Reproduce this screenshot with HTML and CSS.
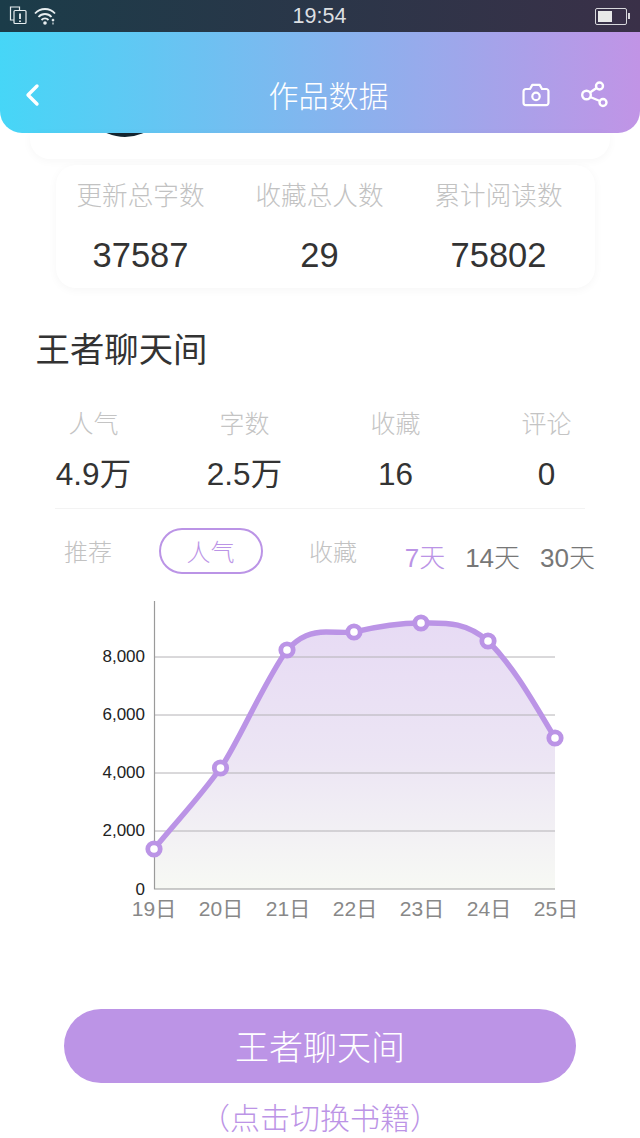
FILE: index.html
```html
<!DOCTYPE html>
<html lang="zh">

<head>
    <meta charset="UTF-8">
    <meta name="viewport" content="width=device-width, initial-scale=1.0">
    <title>作品数据</title>

    <link rel="stylesheet" href="styles.css">
</head>

<body>
    <div class="status-bar">
        <div class="status-icons">
            <svg width="19" height="20" viewBox="0 0 19 20" fill="none" stroke="#e8eef0" stroke-width="1.2">
                <path d="M5 14H1.5V1h9v3" />
                <rect x="5" y="4.500" width="12" height="13" rx="1" />
                <path d="M11 7.500v5.500M11 14.500v1.500" stroke-width="1.800" />
            </svg>
            <svg width="23" height="19" viewBox="0 0 23 19" fill="none" stroke="#e8eef0" stroke-width="1.800">
                <path d="M1 6.500C6.500 0.500 15.500 0.500 21 6.500" />
                <path d="M4.500 10C8 6 14 6 17.500 10" />
                <path d="M7.500 13C9.500 11 12.500 11 14.500 13" />
                <circle cx="11" cy="16" r="1.800" fill="#e8eef0" stroke="none" />
                <path d="M19 12.500v2M17.800 13.500l1.200-1.200 1.200 1.200M19 15.500v2" stroke-width="1.100" />
            </svg>
        </div>
        <div class="status-time">19:54</div>
        <div class="battery">
            <div class="battery-body"><div class="battery-fill"></div></div>
            <div class="battery-nub"></div>
        </div>
    </div>

    <header class="top-bar">
        <svg class="back-icon" width="16" height="24" viewBox="0 0 16 24" fill="none" stroke="#fff" stroke-width="3.400" stroke-linecap="round" stroke-linejoin="round">
            <path d="M12 3L3 12l9 9" />
        </svg>
        <h1 class="top-title">作品数据</h1>
        <svg class="camera-icon" width="28" height="24" viewBox="0 0 30 26" fill="none" stroke="#fff" stroke-width="2.400" stroke-linejoin="round">
            <path d="M4 6.500h4.500L11 2h8l2.500 4.500H26a2.500 2.500 0 0 1 2.500 2.500v12.500A2.500 2.500 0 0 1 26 24H4a2.500 2.500 0 0 1-2.500-2.500V9A2.500 2.500 0 0 1 4 6.500z" />
            <circle cx="15" cy="14.500" r="4" />
        </svg>
        <svg class="share-icon" width="28" height="28" viewBox="0 0 28 28" fill="none" stroke="#fff" stroke-width="2.400">
            <circle cx="6.500" cy="14" r="4.300" />
            <circle cx="19.500" cy="5" r="3.500" />
            <circle cx="23" cy="21.500" r="3.500" />
            <path d="M10 11.500l6.500-4.500M10.200 16l9.700 4" />
        </svg>
    </header>

    <div class="profile-card">
        <div class="avatar"></div>
    </div>

    <section class="total-card">
        <div class="total-grid">
            <div class="total-item">
                <div class="total-label">更新总字数</div>
                <div class="total-value">37587</div>
            </div>
            <div class="total-item">
                <div class="total-label">收藏总人数</div>
                <div class="total-value">29</div>
            </div>
            <div class="total-item">
                <div class="total-label">累计阅读数</div>
                <div class="total-value">75802</div>
            </div>
        </div>
    </section>

    <h2 class="book-title">王者聊天间</h2>

    <section class="book-stats">
        <div class="book-item">
            <div class="book-label">人气</div>
            <div class="book-value">4.9万</div>
        </div>
        <div class="book-item">
            <div class="book-label">字数</div>
            <div class="book-value">2.5万</div>
        </div>
        <div class="book-item">
            <div class="book-label">收藏</div>
            <div class="book-value">16</div>
        </div>
        <div class="book-item">
            <div class="book-label">评论</div>
            <div class="book-value">0</div>
        </div>
    </section>

    <div class="divider"></div>

    <div class="filters">
        <div class="tabs">
            <div class="tab">推荐</div>
            <div class="tab tab-active">人气</div>
            <div class="tab">收藏</div>
        </div>
        <div class="ranges">
            <div class="range range-active">7天</div>
            <div class="range">14天</div>
            <div class="range">30天</div>
        </div>
    </div>

    <svg class="chart" width="640" height="340" viewBox="0 595 640 340">
        <defs>
            <linearGradient id="area-fill" x1="0" y1="623" x2="0" y2="889" gradientUnits="userSpaceOnUse">
                <stop offset="0" stop-color="#e7dbf4" />
                <stop offset="0.5" stop-color="#ece5f4" />
                <stop offset="1" stop-color="#f7f9f4" />
            </linearGradient>
        </defs>

        <path fill="url(#area-fill)" d="M154 849C176 822 200 797 220.500 768C236 747 264 682 287 650C300 636 312 632 326 632C338 632 345 633 354 632C375 627 398 623 421 623C445 623 465 621 488 641C515 668 535 705 555 738V889H154Z" />

        <g stroke="#b4b2b6" stroke-width="1">
            <path d="M154 657H555" />
            <path d="M154 715H555" />
            <path d="M154 773H555" />
            <path d="M154 831H555" />
        </g>
        <path d="M154.500 601V889H555" fill="none" stroke="#9a9a9a" stroke-width="1.200" />

        <g class="y-label" text-anchor="end">
            <text x="145" y="662">8,000</text>
            <text x="145" y="720">6,000</text>
            <text x="145" y="778">4,000</text>
            <text x="145" y="836">2,000</text>
            <text x="145" y="895">0</text>
        </g>

        <g class="x-label" text-anchor="middle">
            <text x="154" y="916">19日</text>
            <text x="221" y="916">20日</text>
            <text x="288" y="916">21日</text>
            <text x="355" y="916">22日</text>
            <text x="422" y="916">23日</text>
            <text x="489" y="916">24日</text>
            <text x="556" y="916">25日</text>
        </g>

        <path fill="none" stroke="#bb94e6" stroke-width="5.400" d="M154 849C176 822 200 797 220.500 768C236 747 264 682 287 650C300 636 312 632 326 632C338 632 345 633 354 632C375 627 398 623 421 623C445 623 465 621 488 641C515 668 535 705 555 738" />

        <g fill="#fff" stroke="#bb94e6" stroke-width="4.800">
            <circle cx="154" cy="849" r="6.200" />
            <circle cx="220.500" cy="768" r="6.200" />
            <circle cx="287" cy="650" r="6.200" />
            <circle cx="354" cy="632" r="6.200" />
            <circle cx="421" cy="623" r="6.200" />
            <circle cx="488" cy="641" r="6.200" />
            <circle cx="555" cy="738" r="6.200" />
        </g>
    </svg>

    <div class="switch-btn">王者聊天间</div>
    <div class="switch-hint">（点击切换书籍）</div>
</body>

</html>
```

FILE: styles.css
```css
* {
    box-sizing: border-box;
    margin: 0;
    font-family: "Liberation Sans", "Noto Sans CJK SC", sans-serif;
}

body {
    width: 640px;
    height: 1138px;
    overflow: hidden;
    background: white;
}

.status-bar {
    display: grid;
    grid-template-columns: 1fr auto 1fr;
    align-items: center;
    height: 32px;
    padding: 0 10px 0 9px;
    background: linear-gradient(to right, #1b3c49, #3a3048);
}

.status-icons {
    display: flex;
    align-items: center;
    gap: 6px;
}

.status-time {
    font-size: 21.500px;
    color: #dcdfe2;
}

.battery {
    display: flex;
    align-items: center;
    justify-content: flex-end;
    gap: 1px;
}

.battery-body {
    width: 32px;
    height: 17px;
    padding: 2px;
    border: 1px solid #d8d8dc;
    border-radius: 2px;
}

.battery-fill {
    width: 14px;
    height: 100%;
    background: #e8e8e8;
}

.battery-nub {
    width: 2px;
    height: 6px;
    background: #d8d8dc;
}

.top-bar {
    display: flex;
    align-items: center;
    height: 101px;
    padding: 24px 32px 0 25px;
    border-radius: 0 0 22px 22px;
    background: linear-gradient(to right, #46d6f7, #c194e6);
}

.back-icon {
    flex: none;
}

.top-title {
    flex: 1;
    margin-bottom: 2px;
    padding-left: 94px;
    font-size: 30px;
    font-weight: 300;
    text-align: center;
    color: white;
}

.camera-icon {
    flex: none;
    margin-right: 30px;
}

.share-icon {
    flex: none;
}

.profile-card {
    height: 26px;
    margin: 0 30px;
    overflow: hidden;
    border-radius: 0 0 20px 20px;
    box-shadow: 0 2px 10px rgba(0, 0, 0, 0.035);
}

.avatar {
    width: 90px;
    height: 90px;
    margin: -86px 0 0 50px;
    border-radius: 50%;
    background: #14242e;
}

.total-card {
    width: 539px;
    height: 123px;
    margin: 6px 0 0 56px;
    padding-top: 15px;
    border-radius: 20px;
    background: white;
    box-shadow: 0 2px 10px rgba(0, 0, 0, 0.04);
}

.total-grid {
    display: grid;
    grid-template-columns: repeat(3, 179px);
    margin-left: -5px;
}

.total-item {
    text-align: center;
}

.total-label {
    font-size: 25.600px;
    font-weight: 300;
    line-height: 32px;
    color: #c2c2c2;
}

.total-value {
    margin-top: 23px;
    font-size: 34.500px;
    line-height: 40px;
    color: #333;
}

.book-title {
    margin: 40px 0 0 35.500px;
    font-size: 34.400px;
    font-weight: 400;
    line-height: 44px;
    color: #333;
}

.book-stats {
    display: grid;
    grid-template-columns: repeat(4, 151px);
    margin: 36px 0 0 18px;
}

.book-item {
    text-align: center;
}

.book-label {
    font-size: 25px;
    font-weight: 300;
    line-height: 32px;
    color: #c4c4c4;
}

.book-value {
    margin-top: 14px;
    font-size: 31.500px;
    line-height: 40px;
    color: #333;
}

.divider {
    height: 1px;
    margin: 14px 55px 0;
    background: #f3f3f3;
}

.filters {
    display: flex;
    justify-content: space-between;
    height: 46px;
    margin-top: 19px;
    padding: 0 45px 0 36px;
}

.tabs {
    display: grid;
    grid-template-columns: repeat(3, 104px);
    column-gap: 18.500px;
}

.tab {
    height: 46px;
    font-size: 24px;
    font-weight: 300;
    line-height: 50px;
    text-align: center;
    color: #c2c2c2;
}

.tab-active {
    border: 2px solid #bb94e6;
    border-radius: 23px;
    line-height: 46px;
    color: #bb94e6;
}

.ranges {
    display: flex;
    gap: 20px;
    padding-top: 10px;
    white-space: nowrap;
}

.range {
    font-size: 26px;
    font-weight: 300;
    line-height: 40px;
    color: #777;
}

.range-active {
    color: #bb94e6;
}

.chart {
    display: block;
    margin-top: 21px;
}

.y-label text {
    font-size: 17px;
    fill: #222;
}

.x-label text {
    font-size: 21px;
    fill: #888;
}

.switch-btn {
    height: 74px;
    margin: 74px 64px 0;
    font-size: 34px;
    font-weight: 300;
    line-height: 79px;
    text-align: center;
    color: white;
    border-radius: 37px;
    background: #bc94e6;
}

.switch-hint {
    margin-top: 14px;
    font-size: 30px;
    font-weight: 300;
    line-height: 44px;
    text-align: center;
    color: #bc94e6;
}
```
